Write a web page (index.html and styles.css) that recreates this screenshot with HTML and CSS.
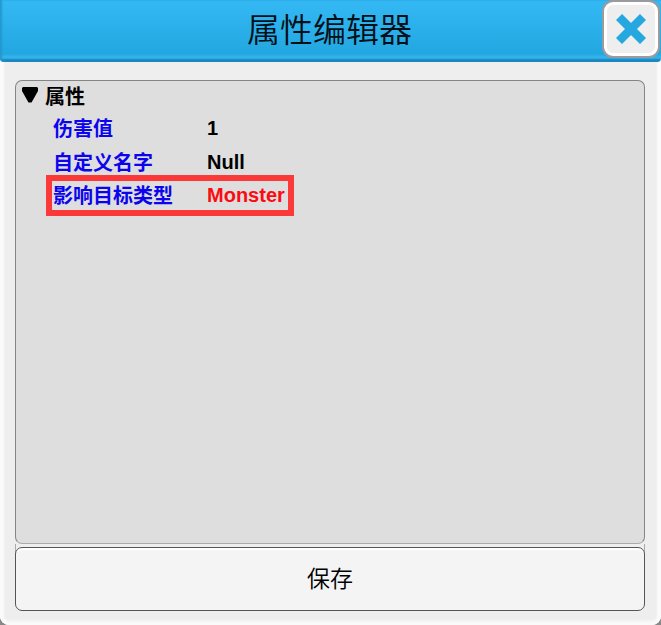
FILE: index.html
```html
<!DOCTYPE html>
<html lang="zh-CN">
<head>
<meta charset="utf-8">
<title>属性编辑器</title>
<link rel="stylesheet" href="styles.css">
</head>
<body>
<main class="dialog">
  <header class="header">
    <h1 class="title">属性编辑器</h1>
    <button class="close" aria-label="关闭">
      <svg width="30" height="30" viewBox="0 0 30 30"><path d="M3 3L27 27M27 3L3 27"/></svg>
    </button>
  </header>
  <div class="body">
    <section class="panel">
      <div class="group">
        <svg class="arrow" width="18" height="18" viewBox="0 0 18 18"><path d="M2 1H16L17 2V5L10.5 16.5H7.5L1 5V2Z"/></svg>
        <span>属性</span>
      </div>
      <div class="row"><span class="name">伤害值</span><span class="value">1</span></div>
      <div class="row"><span class="name">自定义名字</span><span class="value">Null</span></div>
      <div class="row marked"><span class="name">影响目标类型</span><span class="value">Monster</span></div>
    </section>
    <button class="save">保存</button>
  </div>
</main>
</body>
</html>
```
FILE: styles.css
```css
* { box-sizing: border-box; }
body {
  margin: 0;
  background: #888;
  font-family: "Liberation Sans", "Noto Sans CJK SC", sans-serif;
}
.dialog {
  width: 661px;
  height: 625px;
  display: flex;
  flex-direction: column;
  background: #eee;
  border-radius: 0 0 9px 9px;
  box-shadow: inset 4px 0 2px #fafafa, inset -4px 0 2px #fafafa, inset 0 -4px 3px #fafafa;
  overflow: hidden;
}
.header {
  position: relative;
  height: 62px;
  flex: none;
  display: flex;
  justify-content: center;
  background: linear-gradient(#35b9f5, #22a7e1 54px, #35b4ec 57px, #35b4ec 58px, #1a83bd 60px);
  border-radius: 0 0 4px 4px;
  box-shadow: inset 2px 0 2px #2497ce;
}
.title {
  margin: 0 2px 0 0;
  font-size: 33px;
  line-height: 62px;
  font-weight: 350;
  color: #001018;
}
.close {
  position: absolute;
  left: 602px;
  top: 0;
  width: 58px;
  height: 58px;
  padding: 0;
  display: grid;
  place-items: center;
  background: #eee;
  border: 2px solid #9b9b9f;
  border-radius: 11px;
  box-shadow: inset 0 0 0 3px #fff;
}
.close path { stroke: #25a8df; stroke-width: 8.5; fill: none; }
.body {
  margin: 18px 16px 0 15px;
  display: flex;
  flex-direction: column;
  gap: 3px;
  background: linear-gradient(#aaa, #aaa) 0 464px / 1px 10px no-repeat,
              linear-gradient(#aaa, #aaa) 100% 464px / 1px 10px no-repeat;
}
.panel {
  height: 464px;
  padding: 0 0 0 5px;
  background: #dedede;
  border: 1px solid #858585;
  border-bottom-color: #aaa;
  border-radius: 7px;
  font-size: 20px;
  font-weight: 700;
}
.group {
  display: flex;
  align-items: center;
  height: 28px;
  gap: 6px;
  margin-bottom: 3px;
}
.row {
  display: flex;
  align-items: center;
  height: 33px;
  padding-left: 32px;
}
.row + .row { margin-top: 1px; }
.name { width: 154px; padding-bottom: 2px; color: #0b04ed; }
.value { color: #000; }
.row.marked {
  width: 248px;
  height: 41px;
  margin: -4px 0 0 25px;
  padding: 0 0 0 1px;
  border: 6px solid #fb3939;
}
.marked .value { color: #fb0b12; }
.save {
  height: 64px;
  padding: 0;
  background: #f4f4f4;
  border: 1px solid #555;
  border-radius: 7px;
  box-shadow: inset 0 2px 1px #fff;
  color: #000;
  font: 350 23px/60px "Liberation Sans", "Noto Sans CJK SC", sans-serif;
}
```
